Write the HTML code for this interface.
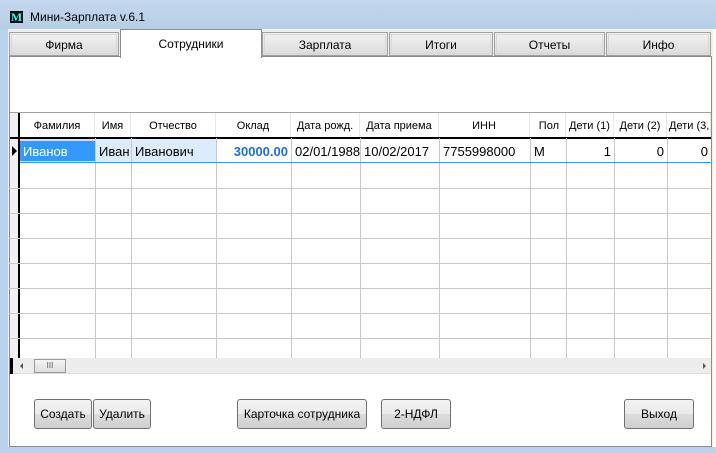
<!DOCTYPE html>
<html><head><meta charset="utf-8"><style>
*{margin:0;padding:0;box-sizing:border-box}
body{width:716px;height:453px;overflow:hidden;position:relative;background:#b9d1ea;font-family:"Liberation Sans",Arial,sans-serif;font-size:12px;color:#000}
.a{position:absolute}
.tab{position:absolute;top:32px;height:24px;border:1px solid #a0a0a0;outline:1px solid #d8d8d8;outline-offset:-3px;background:linear-gradient(#f2f2f2,#dcdcdc);text-align:center;line-height:24px;font-size:12px}
.hd{position:absolute;top:113px;height:25px;line-height:26px;font-size:11px;text-align:center;background:#fff;border-right:1px solid #e8e8e8}
.vl{position:absolute;top:138px;height:220px;width:1px;background:#c8c8c8}
.hl{position:absolute;left:9px;width:702px;height:1px;background:#c8c8c8}
.c{position:absolute;top:138px;height:25px;line-height:27px;font-size:13px;padding:0 3px}
.btn{position:absolute;top:399px;height:30px;border:1px solid #707070;border-radius:3px;background:linear-gradient(#f2f2f2 0,#ebebeb 50%,#dcdcdc 51%,#cfcfcf);text-align:center;line-height:28px;font-size:12px}
</style></head><body>
<div class="a" style="left:0;top:0;width:716px;height:30px;background:linear-gradient(#c4d8ee,#b5cde6)"></div>
<div class="a" style="left:10px;top:11px;width:13px;height:12px;background:#0a0a0a;color:#2ff;font:bold 12px 'Liberation Serif',serif;line-height:12px;text-align:center">M</div>
<div class="a" style="left:30px;top:10px;font-size:12px">Мини-Зарплата v.6.1</div>
<div class="a" style="left:8px;top:29px;width:708px;height:418px;background:#f0f0f0"></div>
<div class="a" style="left:713px;top:29px;width:3px;height:418px;background:#fffbe8"></div>
<div class="tab" style="left:9px;width:110px">Фирма</div>
<div class="tab" style="left:262px;width:126px">Зарплата</div>
<div class="tab" style="left:389px;width:104px">Итоги</div>
<div class="tab" style="left:494px;width:111px">Отчеты</div>
<div class="tab" style="left:606px;width:105px">Инфо</div>
<div class="a" style="left:9px;top:56px;width:703px;height:391px;background:#fff;border:1px solid #8c8c8c"></div>
<div class="a" style="left:120px;top:29px;width:142px;height:29px;background:#fff;border:1px solid #8c8c8c;border-bottom:none;text-align:center;line-height:28px">Сотрудники</div>
<!-- grid -->
<div class="a" style="left:10px;top:112px;width:701px;height:1px;background:#a0a0a0"></div>
<div class="a" style="left:10px;top:113px;width:9px;height:245px;background:#f0f0f0"></div>
<div class="a" style="left:18px;top:113px;width:2px;height:245px;background:#000"></div>
<div class="hd" style="left:20px;width:75px">Фамилия</div>
<div class="hd" style="left:95px;width:36px">Имя</div>
<div class="hd" style="left:131px;width:85px">Отчество</div>
<div class="hd" style="left:216px;width:75px">Оклад</div>
<div class="hd" style="left:291px;width:69px">Дата рожд.</div>
<div class="hd" style="left:360px;width:79px">Дата приема</div>
<div class="hd" style="left:439px;width:91px">ИНН</div>
<div class="hd" style="left:530px;width:36px;text-align:right;padding-right:6px">Пол</div>
<div class="hd" style="left:566px;width:48px">Дети (1)</div>
<div class="hd" style="left:614px;width:53px">Дети (2)</div>
<div class="hd" style="left:667px;width:44px;text-align:left;padding-left:2px;overflow:hidden;white-space:nowrap">Дети (3,.</div>
<div class="a" style="left:10px;top:137px;width:701px;height:2px;background:#000"></div>
<div class="a" style="left:95px;top:139px;width:121px;height:24px;background:#dcecfc"></div>
<div class="a" style="left:20px;top:139px;width:75px;height:24px;background:#3399ff;border:2px solid #c8e0f8;border-left:none;border-right:none"></div>
<div class="a" style="left:12px;top:146px;width:0;height:0;border-left:5px solid #000;border-top:5px solid transparent;border-bottom:5px solid transparent"></div>
<div class="vl" style="left:95px"></div><div class="vl" style="left:131px"></div><div class="vl" style="left:216px"></div><div class="vl" style="left:291px"></div><div class="vl" style="left:360px"></div><div class="vl" style="left:439px"></div><div class="vl" style="left:530px"></div><div class="vl" style="left:566px"></div><div class="vl" style="left:614px"></div><div class="vl" style="left:667px"></div>
<div class="hl" style="top:188px"></div><div class="hl" style="top:213px"></div><div class="hl" style="top:238px"></div><div class="hl" style="top:263px"></div><div class="hl" style="top:288px"></div><div class="hl" style="top:313px"></div><div class="hl" style="top:338px"></div>
<div class="a" style="left:20px;top:162px;width:691px;height:1px;background:#3399ff"></div>
<div class="c" style="left:20px;color:#fff">Иванов</div>
<div class="c" style="left:96px">Иван</div>
<div class="c" style="left:132px">Иванович</div>
<div class="c" style="left:216px;width:75px;text-align:right;color:#1f6fd0;font-weight:bold">30000.00</div>
<div class="c" style="left:292px">02/01/1988</div>
<div class="c" style="left:361px">10/02/2017</div>
<div class="c" style="left:440px">7755998000</div>
<div class="c" style="left:531px">M</div>
<div class="c" style="left:566px;width:48px;text-align:right">1</div>
<div class="c" style="left:614px;width:53px;text-align:right">0</div>
<div class="c" style="left:667px;width:44px;text-align:right">0</div>
<div class="a" style="left:10px;top:358px;width:701px;height:16px;background:#ececec;border-bottom:1px solid #ddd"></div>
<div class="a" style="left:10px;top:358px;width:3px;height:16px;background:#000"></div>
<div class="a" style="left:20px;top:363px;width:0;height:0;border-right:3px solid #555;border-top:3px solid transparent;border-bottom:3px solid transparent"></div>
<div class="a" style="left:34px;top:359px;width:32px;height:14px;border:1px solid #999;background:linear-gradient(#f5f5f5,#ddd);font-size:8px;text-align:center;line-height:12px;color:#555">III</div>
<div class="a" style="left:703px;top:363px;width:0;height:0;border-left:3px solid #555;border-top:3px solid transparent;border-bottom:3px solid transparent"></div>
<div class="btn" style="left:34px;width:58px">Создать</div>
<div class="btn" style="left:93px;width:58px">Удалить</div>
<div class="btn" style="left:237px;width:130px">Карточка сотрудника</div>
<div class="btn" style="left:381px;width:70px">2-НДФЛ</div>
<div class="btn" style="left:624px;width:70px">Выход</div>
</body></html>
